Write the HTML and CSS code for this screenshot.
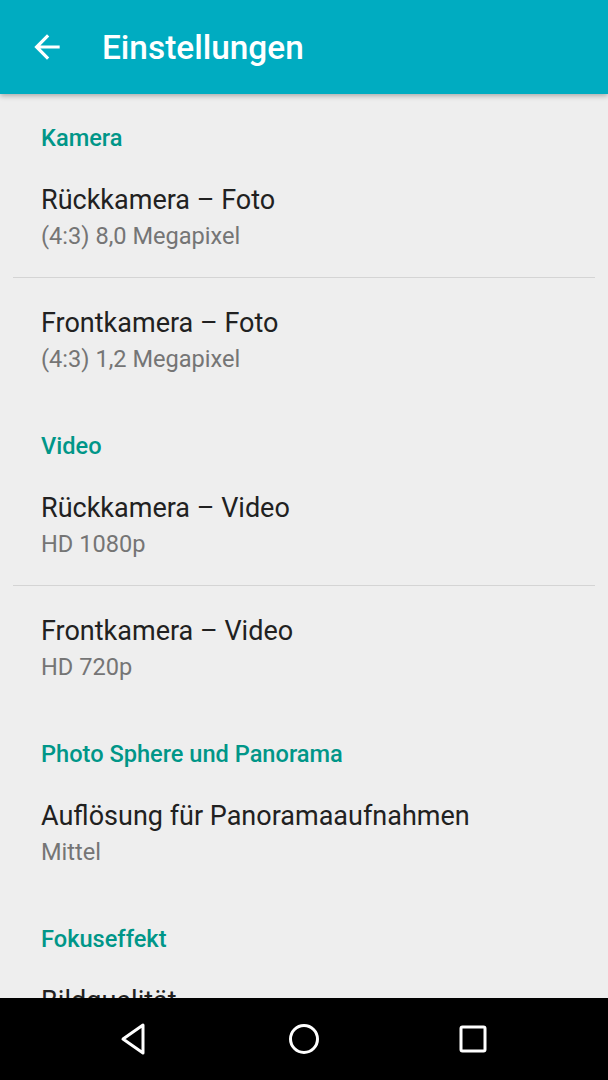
FILE: index.html
```html
<!DOCTYPE html>
<html lang="de">
<head>
<meta charset="utf-8">
<link rel="stylesheet" href="styles.css">
</head>
<body>
<header class="appbar">
  <svg class="back" width="38" height="38" viewBox="0 0 24 24"><path d="M20 11H7.83l5.59-5.59L12 4l-8 8 8 8 1.41-1.41L7.83 13H20v-2z" fill="#fff"/></svg>
  <h1 class="title">Einstellungen</h1>
</header>
<main class="list">
  <div class="category first">Kamera</div>
  <div class="item"><div class="item-title">Rückkamera – Foto</div><div class="item-summary">(4:3) 8,0 Megapixel</div></div>
  <div class="divider"></div>
  <div class="item"><div class="item-title">Frontkamera – Foto</div><div class="item-summary">(4:3) 1,2 Megapixel</div></div>
  <div class="category">Video</div>
  <div class="item"><div class="item-title">Rückkamera – Video</div><div class="item-summary">HD 1080p</div></div>
  <div class="divider"></div>
  <div class="item"><div class="item-title">Frontkamera – Video</div><div class="item-summary">HD 720p</div></div>
  <div class="category">Photo Sphere und Panorama</div>
  <div class="item"><div class="item-title">Auflösung für Panoramaaufnahmen</div><div class="item-summary">Mittel</div></div>
  <div class="category">Fokuseffekt</div>
  <div class="item"><div class="item-title">Bildqualität</div><div class="item-summary">Hoch</div></div>
</main>
<nav class="navbar">
  <svg class="nav-icon" width="40" height="40" viewBox="0 0 40 40"><path d="M28 6 L28 34 L8 20 Z" fill="none" stroke="#fff" stroke-width="3" stroke-linejoin="round"/></svg>
  <svg class="nav-icon" width="40" height="40" viewBox="0 0 40 40"><circle cx="20" cy="20" r="13.5" fill="none" stroke="#fff" stroke-width="3"/></svg>
  <svg class="nav-icon" width="40" height="40" viewBox="0 0 40 40"><rect x="8" y="8" width="24" height="24" rx="1.5" fill="none" stroke="#fff" stroke-width="3"/></svg>
</nav>
</body>
</html>
```

FILE: styles.css
```css
html, body {
  margin: 0;
  padding: 0;
  height: 100%;
  overflow: hidden;
}
body {
  background: #eeeeee;
  font-family: Roboto, "Noto Sans", sans-serif;
  width: 608px;
  height: 1080px;
  position: relative;
}
.appbar {
  height: 94px;
  background: #00acc1;
  display: flex;
  align-items: center;
  box-shadow: 0 2px 5px rgba(0,0,0,0.28);
  position: relative;
  z-index: 1;
}
.back {
  margin-left: 28px;
  margin-top: -1px;
}
.title {
  margin: 1px 0 0 36px;
  color: #fff;
  font-size: 33.4px;
  font-weight: 500;
  line-height: 1;
}
.list {
  display: flex;
  flex-direction: column;
}
.category {
  padding: 28px 41px 0;
  line-height: 36px;
  height: 36px;
  font-size: 23.6px;
  font-weight: 500;
  color: #009688;
}
.category.first {
  padding-top: 26px;
}
.item {
  padding: 26px 41px 23px;
}
.item-title {
  font-size: 27px;
  line-height: 36px;
  height: 36px;
  color: #212121;
  white-space: nowrap;
}
.item-summary {
  font-size: 23.6px;
  line-height: 36px;
  height: 36px;
  color: #757575;
}
.divider {
  height: 1px;
  background: #d4d4d4;
  margin: 0 13px 1px;
}
.navbar {
  position: absolute;
  left: 0;
  right: 0;
  bottom: 0;
  height: 82px;
  background: #000;
  display: flex;
  justify-content: center;
  align-items: center;
  gap: 129px;
  z-index: 2;
}
```
